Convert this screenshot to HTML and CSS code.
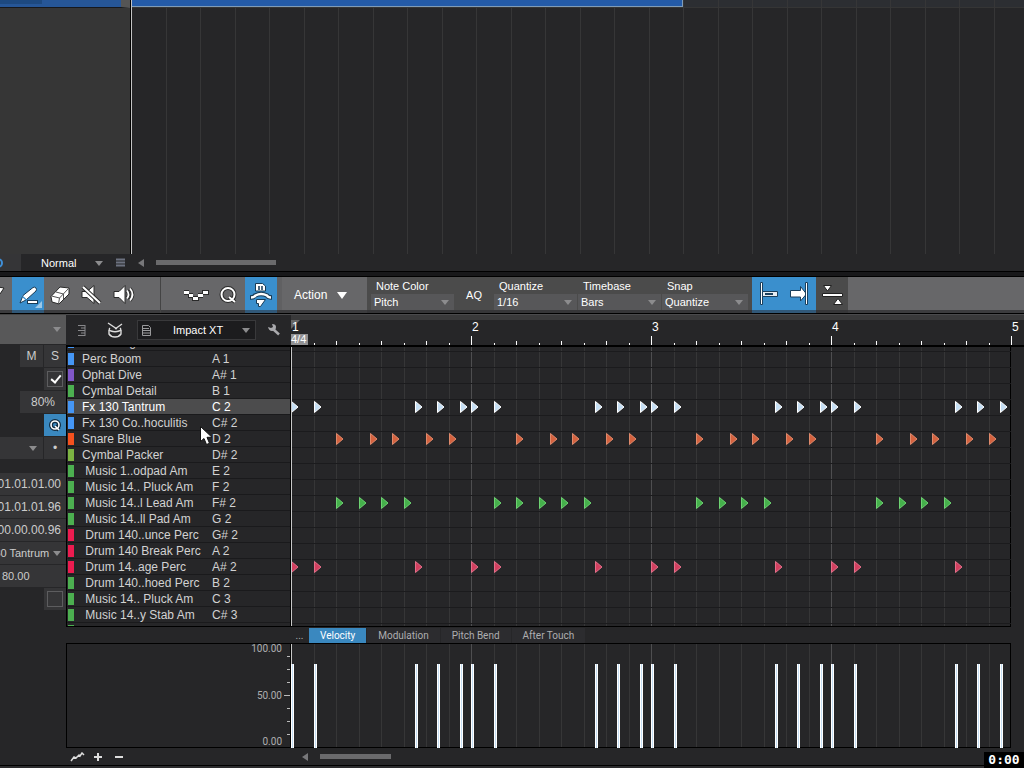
FILE: index.html
```html
<!DOCTYPE html>
<html lang="en">
<head>
<meta charset="utf-8">
<title>Impact XT – Drum Editor</title>
<link rel="stylesheet" href="styles.css">
</head>
<body>
<div class="app">
  <section class="arranger" aria-label="Arrangement">
    <div class="track-list"><div class="track-strip"><span class="track-meter"></span></div></div>
    <div class="arrange-view">
      <div class="arrange-strip"></div>
      <div class="arrange-grid" id="arrangeGrid"></div>
      <div class="clip"></div>
    </div>
  </section>
  <div class="arranger-foot">
    <div class="foot-knob"><svg width="8" height="12" viewBox="0 0 8 12"><circle cx="-2" cy="6" r="4" fill="none" stroke="#3f8fd8" stroke-width="2"/></svg></div>
    <label class="pick normal"><select aria-label="Automation mode"><option>Normal</option></select><svg class="caret" viewBox="0 0 8 5"><path d="M0 0h8L4 5z"/></svg></label>
    <svg class="foot-menu" width="9" height="10" viewBox="0 0 9 10"><path d="M0 1.500h9M0 4.500h9M0 7.500h9" stroke="#6d7280" stroke-width="2"/></svg>
    <svg class="foot-left" width="6" height="8" viewBox="0 0 6 8"><path d="M6 0v8L0 4z" fill="#77777a"/></svg>
    <span class="thumb thumb-top"></span>
  </div>
  <div class="splitter"></div>

  <header class="toolbar">
    <button class="tool tool-arrow" aria-label="Arrow"><svg width="12" height="24" viewBox="0 0 12 33"><path d="M-8 9L4 11 0 17z" fill="#fff" stroke="#222"/></svg></button>
    <button class="tool on" aria-label="Paint"><svg width="32" height="33" viewBox="0 0 32 33"><path d="M8 26l3-7.500 10-8q2-1 3 .5t0 3L14 23z" fill="#fff" stroke="#173a55" stroke-width="1"/><path d="M10.500 19.500l4 3.500" stroke="#3a8fcd" stroke-width="1.200"/><path d="M15 25h11" stroke="#173a55" stroke-width="4"/><path d="M16 25h9" stroke="#fff" stroke-width="2"/><path d="M30 24v7h-7z" fill="#9cc7e6"/></svg></button>
    <button class="tool" aria-label="Erase"><svg width="32" height="33" viewBox="0 0 32 33"><path d="M7 19.500L16 10l9 1v6l-10 10-7-2z" fill="#fff" stroke="#2a2a2a"/><path d="M7.500 19l8 2 9-9.500M15.500 21l-1 6M12 15l7.500 2M19.500 17v5" fill="none" stroke="#555"/></svg></button>
    <button class="tool" aria-label="Mute"><svg width="32" height="33" viewBox="0 0 32 33"><path d="M6 14.500h5l7-6v18l-7-6H6z" fill="#fff" stroke="#2a2a2a"/><path d="M7 10l17 16" stroke="#2a2a2a" stroke-width="4"/><path d="M7 10l17 16" stroke="#fff" stroke-width="2"/></svg></button>
    <button class="tool" aria-label="Listen"><svg width="32" height="33" viewBox="0 0 32 33"><path d="M6 14.500h5l6-6v18l-6-6H6z" fill="#fff" stroke="#2a2a2a"/><path d="M19 13.500q3 4 0 8M22 11.500q5 6 0 12" fill="none" stroke="#2a2a2a" stroke-width="3.500"/><path d="M19 13.500q3 4 0 8M22 11.500q5 6 0 12" fill="none" stroke="#fff" stroke-width="1.800"/></svg></button>
    <span class="tool-gap"></span>
    <button class="tool tool-mono" aria-label="Velocity curve"><svg width="30" height="33" viewBox="0 0 30 33"><path d="M3 15.500h5M7 18.500h5M11 21.500h7M17 18.500h5M21 15.500h7" stroke="#2a2a2a" stroke-width="5"/><path d="M3 15.500h5M8 18.500h4M12 21.500h5M17 18.500h5M22 15.500h5" stroke="#fff" stroke-width="3"/></svg></button>
    <button class="tool" aria-label="Quantize"><svg width="32" height="33" viewBox="0 0 32 33"><g fill="none" stroke="#2a2a2a" stroke-width="4"><circle cx="15" cy="17.500" r="6.500"/><path d="M16 20l6 5"/></g><g fill="none" stroke="#fff" stroke-width="2"><circle cx="15" cy="17.500" r="6.500"/><path d="M16 20l6 5"/></g></svg></button>
    <button class="tool on" aria-label="Drum mode"><svg width="32" height="33" viewBox="0 0 32 33"><path d="M10.500 6.500h7l3 2.500v5h-10z" fill="#fff" stroke="#173a55"/><path d="M14 9v4M17 9v4" stroke="#173a55" stroke-width="1.500"/><path d="M5 20.500q4 0 5-2 6-3 12 0 1 2 5 2" fill="none" stroke="#173a55" stroke-width="4.500"/><path d="M6 20.500q3 0 4.500-2 5.500-3 11.500 0 1 2 4 2" fill="none" stroke="#fff" stroke-width="2.500"/><path d="M11.500 22.500h9l-5 7h-2v-3h-2z" fill="#fff" stroke="#173a55"/></svg></button>
    <button class="action">Action<svg width="10" height="7" viewBox="0 0 10 7"><path d="M0 0h10L5 7z" fill="#fff"/></svg></button>
    <div class="params">
      <div class="param"><label for="noteColor">Note Color</label><div class="pick"><select id="noteColor"><option>Pitch</option></select><svg class="caret" viewBox="0 0 8 5"><path d="M0 0h8L4 5z"/></svg></div></div>
      <button class="aq">AQ</button>
      <div class="param"><label for="quant">Quantize</label><div class="pick"><select id="quant"><option>1/16</option></select><svg class="caret" viewBox="0 0 8 5"><path d="M0 0h8L4 5z"/></svg></div></div>
      <div class="param"><label for="timebase">Timebase</label><div class="pick"><select id="timebase"><option>Bars</option></select><svg class="caret" viewBox="0 0 8 5"><path d="M0 0h8L4 5z"/></svg></div></div>
      <div class="param"><label for="snap">Snap</label><div class="pick"><select id="snap"><option>Quantize</option></select><svg class="caret" viewBox="0 0 8 5"><path d="M0 0h8L4 5z"/></svg></div></div>
    </div>
    <button class="tool on" aria-label="Snap to start"><svg width="32" height="33" viewBox="0 0 32 33"><path d="M8.500 5.500h2v22h-2z" fill="#fff" stroke="#1a3f5c"/><path d="M10.500 14.500h15v5h-15z" fill="#e6edf2" stroke="#1a3f5c"/><path d="M13 17h8" stroke="#1a3f5c" stroke-width="2"/></svg></button>
    <button class="tool on" aria-label="Autoscroll"><svg width="32" height="33" viewBox="0 0 32 33"><path d="M6.500 13.500h10V9.500l6 7.500-6 7v-4h-10z" fill="#fff" stroke="#1a3f5c"/><path d="M21.500 5.500h2v22h-2z" fill="#fff" stroke="#1a3f5c"/></svg></button>
    <button class="tool tool-dark" aria-label="Split view"><svg width="32" height="33" viewBox="0 0 32 33"><path d="M7.500 8.500h8l-4 5.500zM6.500 16.500h20v3h-20zM17.500 27.500h9l-4.500-6z" fill="#fff" stroke="#222"/></svg></button>
  </header>

  <main class="editor">
    <aside class="inspector">
      <button class="ins-head" aria-label="Inspector menu"><svg class="caret" viewBox="0 0 8 5"><path d="M0 0h8L4 5z"/></svg></button>
      <div class="ins-row"><button class="sq letter">M</button><button class="sq">S</button></div>
      <div class="ins-row"><label class="sq"><input type="checkbox" checked aria-label="Enabled"></label></div>
      <div class="ins-row"><button class="sq wide">80%</button></div>
      <div class="ins-row"><button class="sq q-on" aria-label="Quantize note"><svg width="14" height="16" viewBox="0 0 14 16"><g fill="none" stroke="#122c40" stroke-width="4"><circle cx="7" cy="8" r="4"/><path d="M7 9l4 4"/></g><g fill="none" stroke="#fff" stroke-width="1.600"><circle cx="7" cy="8" r="4"/><path d="M7 9l4 4"/></g></svg></button></div>
      <div class="ins-row"><button class="sq preset" aria-label="Preset"><svg class="caret" viewBox="0 0 8 5"><path d="M0 0h8L4 5z"/></svg></button><button class="sq">•</button></div>
      <div class="fields">
        <input class="field" value="01.01.01.00" aria-label="Start">
        <input class="field" value="01.01.01.96" aria-label="End">
        <input class="field" value="00.00.00.96" aria-label="Length">
        <div class="field pick"><select aria-label="Pitch"><option>Fx 130 Tantrum</option></select><svg class="caret" viewBox="0 0 8 5"><path d="M0 0h8L4 5z"/></svg></div>
        <input class="field velo" value="80.00" aria-label="Velocity">
      </div>
      <div class="ins-row"><label class="sq"><input type="checkbox" aria-label="Mute note"></label></div>
    </aside>

    <div class="sheet">
      <div class="head-list">
        <svg width="8" height="11" viewBox="0 0 8 11"><path d="M0 .5h7M3 3h4M0 5.500h7M3 8h4M0 10.500h7M7 0v11" stroke="#88888b" fill="none"/></svg>
        <svg width="16" height="16" viewBox="0 0 16 16" fill="none" stroke="#ddd" stroke-width="1.400"><path d="M1 1l9 6M15 2L8 7"/><path d="M3 6q-2 2 1 3 4 1.500 8 0 3-1 1-3"/><path d="M2 8v4q2 3 6 3t6-3V8"/></svg>
        <div class="pick instrument">
          <svg width="9" height="11" viewBox="0 0 9 11" fill="none" stroke="#9a9a9c"><path d="M.5.500h6l2 2v8h-8zM1 3.500h6M1 5.500h7M1 8h7"/></svg>
          <select aria-label="Instrument"><option>Impact XT</option></select><svg class="caret" viewBox="0 0 8 5"><path d="M0 0h8L4 5z"/></svg>
        </div>
        <svg class="wrench" width="12" height="12" viewBox="0 0 12 12"><path d="M5 5l6 5.500" stroke="#aaaaad" stroke-width="2.500"/><path d="M0 3l3 1 2-1-1-3q4 0 4 3 0 4-4 4-3 0-4-4" fill="#aaaaad"/></svg>
      </div>
      <div class="ruler"><div class="ruler-scale" id="ruler"><span class="loop-flag"></span><span class="meter">4/4</span></div></div>

      <div class="drum-list" id="drums"></div>
      <div class="lanes" id="lanes"></div>

      <div class="tabs-pad"></div>
      <nav class="tabs"><button class="dots">...</button><button class="current">Velocity</button><button>Modulation</button><button>Pitch Bend</button><button>After Touch</button></nav>

      <div class="scale">
        <span>100.00</span><span>50.00</span><span>0.00</span>
        <svg class="scale-ticks" width="6" height="103" viewBox="0 0 6 103"><path d="M3 12.500h3M3 25.500h3M3 38.500h3M0 51.500h6M3 64.500h3M3 77.500h3M3 90.500h3" stroke="#bbb"/></svg>
      </div>
      <div class="velocity" id="velocity"></div>

      <div class="foot-tools">
        <svg width="15" height="10" viewBox="0 0 15 10"><path d="M1 9l3-4 2 1 3-3 1 1 2-3 2 2" fill="none" stroke="#ddd" stroke-width="1.500"/></svg>
        <button aria-label="Zoom in"><svg width="8" height="8" viewBox="0 0 8 8"><path d="M0 4h8M4 0v8" stroke="#ddd" stroke-width="2"/></svg></button>
        <button aria-label="Zoom out"><svg width="8" height="8" viewBox="0 0 8 8"><path d="M0 4h8" stroke="#ddd" stroke-width="2"/></svg></button>
      </div>
      <div class="foot-scroll"><svg width="6" height="8" viewBox="0 0 6 8"><path d="M6 0v8L0 4z" fill="#77777a"/></svg><span class="thumb thumb-bottom"></span></div>
    </div>
  </main>
  <div class="bottom-edge"></div>
  <svg class="pointer" width="14" height="20" viewBox="0 0 14 20"><path d="M.5.500v15l3.500-3 2.500 6 3-1.200-2.500-6h5z" fill="#fff" stroke="#111"/></svg>
  <time class="clock">0:00</time>
</div>
<script src="app.js"></script>
</body>
</html>
```
FILE: styles.css
```css
* { box-sizing: border-box; }
body { margin: 0; background: #262628; color: #fff; font: 11px/14px "Liberation Sans", Arial, sans-serif; overflow: hidden; }
button, input, select { font: inherit; color: inherit; background: none; border: 0; border-radius: 0; padding: 0; margin: 0; }
svg { display: block; flex: none; }
.app { position: relative; min-height: 100vh; display: flex; flex-direction: column; }

.pick { position: relative; display: flex; align-items: center; }
.pick select { appearance: none; width: 100%; height: 100%; outline: 0; }
.caret { width: 8px; height: 5px; fill: #8c8c8e; }
.pick .caret { position: absolute; right: 5px; top: 50%; margin-top: -2px; pointer-events: none; }
.thumb { height: 5px; background: #6a6a6c; }

/* arrangement */
.arranger { flex: 1 0 254px; display: grid; grid-template-columns: 131px 1fr; }
.track-list { background: #363636; border-right: 1px solid #000; }
.track-strip { height: 8px; background: #265697; border-bottom: 1px solid #16181c; border-right: 9px solid #555; }
.track-meter { display: block; width: 42px; height: 4px; background: #1d4980; }
.arrange-view { position: relative; overflow: hidden; border-left: 1px solid #c4c4c4; }
.arrange-strip { height: 8px; background: #2c2e32; border-bottom: 1px solid #353535; }
.arrange-grid { position: absolute; inset: 0 0 0 -1px; }
.arrange-grid i { position: absolute; top: 0; bottom: 0; width: 1px; background: #363637; }
.clip { position: absolute; top: 0; left: 0; width: 551px; height: 7px; background: #245ba8; border: solid #7f9cb8; border-width: 0 1px 1px 0; }

.arranger-foot { height: 17px; display: flex; align-items: center; }
.foot-knob { width: 21px; height: 17px; padding-top: 3px; background: #353537; }
.normal { width: 87px; height: 17px; margin-right: 8px; padding-left: 20px; }
.foot-left { margin-left: 13px; }
.thumb-top { width: 120px; margin-left: 12px; }
.splitter { height: 6px; background: #18181a; border: solid #000; border-width: 1px 0; }

/* toolbar */
.toolbar { height: 37px; display: flex; background: linear-gradient(#676769 33px, #3c3c3e 33px); border-bottom: 1px solid #000; }
.tool { width: 32px; height: 36px; flex: none; display: flex; align-items: flex-start; }
.tool svg { height: 33px; }
.tool-arrow { width: 12px; overflow: hidden; }
.tool.on { background: linear-gradient(#3a8fcd 33px, #315878 33px); }
.tool-gap { width: 21px; border-right: 1px solid #444; }
.tool-mono { width: 52px; padding-left: 20px; }
.action { width: 90px; height: 33px; padding: 3px 0 0 12px; display: flex; align-items: center; gap: 10px; font-size: 12px; border-left: 5px solid #606062; }
.params { display: flex; padding-left: 4px; gap: 1px; background: linear-gradient(#4b4b4b 33px, #363638 33px); }
.param { width: 83px; padding-top: 1px; }
.param label { display: block; padding-left: 5px; line-height: 16px; }
.param .pick { height: 16px; background: #575759; }
.param select { padding-left: 3px; }
.aq { width: 38px; height: 36px; }
.param:last-child { width: 90px; border-right: 4px solid #4b4b4b; height: 33px; }
.tool-dark { background: linear-gradient(#4b4b4b 33px, #363638 33px); }

/* inspector */
.editor { display: grid; grid-template-columns: 66px 1fr; }
.inspector { overflow: hidden; color: #ccc; padding-bottom: 20px; }
.ins-head { width: 100%; height: 30px; display: flex; align-items: center; justify-content: flex-end; padding-right: 5px; background: #585859; margin-bottom: 1px; border-top: 1px solid #444; }
.ins-row { display: flex; justify-content: flex-end; gap: 1px; height: 23px; }
.sq { width: 22px; height: 22px; background: #353537; display: flex; align-items: center; justify-content: center; font-size: 12px; }
.letter { width: 23px; }
.wide { width: 46px; }
.q-on { background: #3a88bf; }
.preset { width: 43px; justify-content: flex-end; padding-right: 6px; }
.sq input { appearance: none; width: 16px; height: 16px; border: 1px solid #5d5d5f; position: relative; }
.sq input:checked::after { content: ""; position: absolute; left: 5px; top: 1px; width: 4px; height: 8px; border: solid #fff; border-width: 0 2px 2px 0; transform: rotate(40deg); }
.fields { margin: 13px 0 1px; display: flex; flex-direction: column; align-items: flex-end; gap: 1px; }
.field { width: 110px; height: 22px; background: #353537; text-align: right; padding-right: 5px; font-size: 12px; }
.field.pick { font-size: 11px; padding: 0 0 0 17px; }
.field.velo { width: 66px; text-align: left; padding-left: 2px; font-size: 11px; }

/* drum editor */
.sheet { display: grid; grid-template-columns: 225px 1fr; grid-template-rows: 33px 280px 16px 105px 17px; }
.head-list { display: flex; align-items: center; padding: 0 11px 0 12px; gap: 12px; border-top: 1px solid #4a4a4c; border-bottom: 2px solid #000; }
.head-list > svg:first-child { margin-right: 9px; }
.instrument { flex: 1; height: 20px; margin: 0 0 0 2px; background: #1c1c1e; border: 1px solid #39393b; padding-left: 4px; }
.instrument select { padding-left: 22px; }
.ruler { border-top: 1px solid #4a4a4c; border-bottom: 2px solid #000; padding-right: 13px; background: linear-gradient(#39393a 5px, #262628 5px); }
.ruler-scale { position: relative; height: 30px; }
.ruler-scale i { position: absolute; bottom: 0; width: 1px; background: #fff; }
.ruler-scale b { position: absolute; top: 6px; margin-left: 1px; font-weight: 400; font-size: 12px; line-height: 12px; }
.loop-flag { position: absolute; left: 0; top: 5px; border: solid transparent; border-width: 9px 9px 0 0; border-top-color: #666; }
.meter { position: absolute; left: 0; top: 19px; width: 17px; height: 11px; font-size: 11px; line-height: 11px; background: #919193; }

.drum-list { border: solid #000; border-width: 0 1px 1px; overflow: hidden; color: #d2d2d2; font-size: 12px; }
.drum { display: grid; grid-template-columns: 7px 137px 1fr; height: 16px; line-height: 16px; border-bottom: 1px solid #1a1a1c; padding-left: 1px; white-space: pre; }
.drum .swatch { width: 6px; height: 12px; margin-top: 2px; background: var(--c); }
.drum .name { padding-left: 7px; }
.drum.cut { height: 4px; align-content: end; overflow: hidden; }
.drum.picked { background: #4c4c4d; color: #fff; }
.lanes, .velocity { position: relative; margin-right: 13px; border-bottom: 1px solid #000; overflow: hidden; box-shadow: inset -1px 0 #000; }
.lanes::before, .velocity::before { content: ""; position: absolute; z-index: 2; left: 0; top: 0; bottom: 0; width: 1px; background: #c8c8c8; }
.lane { height: 16px; border-top: 1px solid #1b1b1d; position: relative; }
.lane:first-of-type { margin-top: 4px; }
.lane svg { position: absolute; z-index: 1; top: 1px; }
.gridline { position: absolute; top: 0; bottom: 0; width: 1px; background: #363637; }
.gridline.bar { background: #4e4e50; }

.tabs { display: flex; padding: 1px 0 0; color: #aeaeb0; font-family: Roboto, sans-serif; font-size: 10px; }
.tabs button { padding: 1px 11px; background: #2c2c2f; margin-right: 1px; line-height: 13px; }
.tabs .dots { width: 17px; padding: 0; text-align: center; background: none; }
.tabs .current { background: #3a88bf; color: #fff; }

.scale { position: relative; border: 1px solid #000; padding: 0 8px 0 0; display: flex; flex-direction: column; justify-content: space-between; align-items: flex-end; color: #aeaeb0; font: 10px/10px Roboto, sans-serif; }
.scale-ticks { position: absolute; right: 0; top: 0; }
.velocity { border-top: 1px solid #000; overflow: visible; }
.velocity .hit { position: absolute; z-index: 3; bottom: -1px; height: 84px; width: 3px; background: #c5dff5; border: solid #fff; border-width: 0 1px; }
.foot-tools { display: flex; align-items: center; gap: 13px; padding-left: 4px; }
.foot-tools > svg { margin-right: -4px; }
.foot-scroll { display: flex; align-items: center; gap: 12px; padding-left: 11px; }
.thumb-bottom { width: 71px; }
.bottom-edge { height: 3px; background: #2c2c2e; border-top: 1px solid #000; }
.pointer { position: absolute; left: 200px; bottom: 322px; z-index: 5; }
.clock { position: absolute; right: 0; bottom: 0; width: 40px; height: 16px; background: #000; font: bold 13px/15px "DejaVu Sans Mono", monospace; text-align: center; }
```
FILE: app.js
```js
const BLUE = '#4596f5', PURPLE = '#8057c8', GREEN = '#4caf50', ORANGE = '#f4511e', OLIVE = '#7cb342', RED = '#ec1c50';
const drums = [
  ['Low Conga', 'G# 1', BLUE],
  ['Perc Boom', 'A 1', BLUE], ['Ophat Dive', 'A# 1', PURPLE], ['Cymbal Detail', 'B 1', GREEN],
  ['Fx 130 Tantrum', 'C 2', BLUE], ['Fx 130 Co..hoculitis', 'C# 2', BLUE], ['Snare Blue', 'D 2', ORANGE],
  ['Cymbal Packer', 'D# 2', OLIVE], [' Music 1..odpad Am', 'E 2', GREEN], [' Music 14.. Pluck Am', 'F 2', GREEN],
  [' Music 14..l Lead Am', 'F# 2', GREEN], [' Music 14..ll Pad Am', 'G 2', GREEN], [' Drum 140..unce Perc', 'G# 2', RED],
  [' Drum 140 Break Perc', 'A 2', RED], [' Drum 14..age Perc', 'A# 2', RED], [' Drum 140..hoed Perc', 'B 2', GREEN],
  [' Music 14.. Pluck Am', 'C 3', GREEN], [' Music 14..y Stab Am', 'C# 3', GREEN], ['', '', GREEN]
];
const everyBar = steps => [0, 16, 32, 48].flatMap(bar => steps.map(s => s + bar));
const tantrum = everyBar([0, 2, 11, 13, 15]);
const notes = {
  4: { at: tantrum, fill: '#c5dff5', edge: '#ffffff' },
  6: { at: everyBar([4, 7, 9, 12, 14]), fill: '#d4623f', edge: '#e08a6c' },
  10: { at: [4, 6, 8, 10, 18, 20, 22, 24, 26, 36, 38, 40, 42, 52, 54, 56, 58], fill: '#45b04b', edge: '#6ed272' },
  14: { at: [0, 2, 11, 16, 18, 27, 32, 34, 43, 48, 50, 59], fill: '#d24060', edge: '#e2708a' }
};
const pct = step => (step / 64 * 100) + '%';

document.getElementById('drums').innerHTML = drums.map(([name, key, color], i) =>
  `<div class="drum${i === 0 ? ' cut' : ''}${i === 4 ? ' picked' : ''}"><span class="swatch" style="--c:${color}"></span><span class="name">${name}</span><span>${key}</span></div>`).join('');

let grid = '';
for (let s = 2; s < 64; s += 2) grid += `<i class="gridline${s % 16 ? '' : ' bar'}" style="left:${pct(s)}"></i>`;
let lanes = '';
for (let i = 1; i < drums.length; i++) {
  const n = notes[i];
  lanes += '<div class="lane">' + (n ? n.at.map(s =>
    `<svg width="8" height="12" viewBox="0 0 8 12" style="left:${pct(s)}"><path d="M.5.500L7 6 .5 11.500z" fill="${n.fill}" stroke="${n.edge}"/></svg>`).join('') : '') + '</div>';
}
document.getElementById('lanes').innerHTML = grid + lanes;
document.getElementById('velocity').innerHTML = grid + tantrum.map(s => `<span class="hit" style="left:${pct(s)}"></span>`).join('');

let ticks = '';
for (let s = 0; s <= 64; s += 2) {
  const h = s % 16 === 0 ? 9 : s % 4 === 0 ? 4 : 2;
  if (s) ticks += `<i style="left:${pct(s)};height:${h}px"></i>`;
  if (s % 16 === 0) ticks += `<b style="left:${pct(s)}">${s / 16 + 1}</b>`;
}
document.getElementById('ruler').insertAdjacentHTML('beforeend', ticks);

let lines = '';
for (let n = 1; n < 80; n++) lines += `<i style="left:${n * 34.5}px"></i>`;
document.getElementById('arrangeGrid').innerHTML = lines;
```
